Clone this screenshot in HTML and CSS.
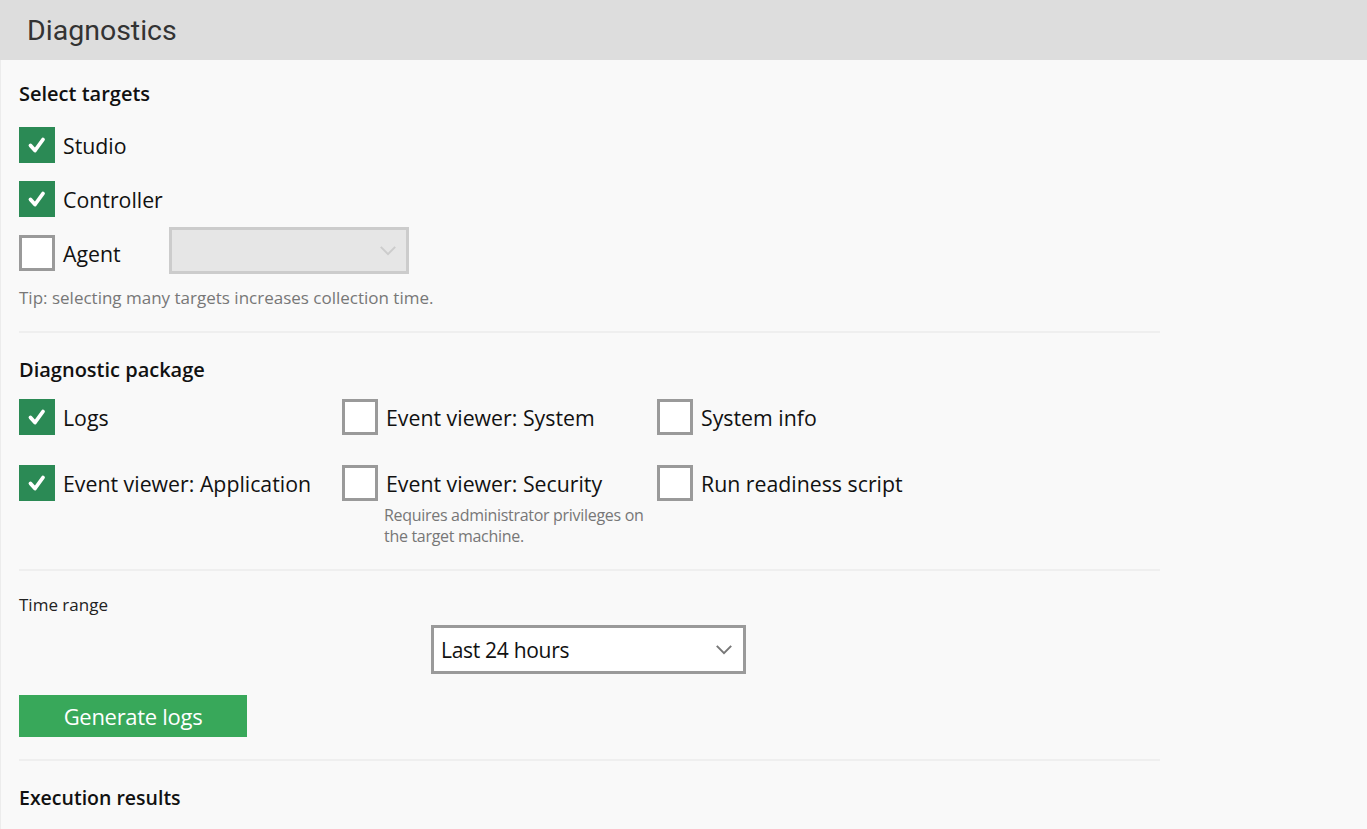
FILE: index.html
```html
<!DOCTYPE html>
<html lang="en">
<head>
    <meta charset="UTF-8">
    <meta name="viewport" content="width=device-width, initial-scale=1.0">
    <title>Diagnostics</title>
    <link rel="stylesheet" href="styles.css">
</head>
<body>
    <div class="header">
        <h1>Diagnostics</h1>
    </div>

    <div class="content">
        <div class="section">
            <h2>Select targets</h2>
            <div class="target-list">
                <div class="check-row">
                    <span class="box checked">
                        <svg viewBox="0 0 36 36"><polyline points="11.5,18.5 16,23.5 24,12.5"/></svg>
                    </span>
                    <span class="label">Studio</span>
                </div>
                <div class="check-row">
                    <span class="box checked">
                        <svg viewBox="0 0 36 36"><polyline points="11.5,18.5 16,23.5 24,12.5"/></svg>
                    </span>
                    <span class="label">Controller</span>
                </div>
                <div class="check-row">
                    <span class="box"></span>
                    <span class="label agent-label">Agent</span>
                    <div class="select disabled">
                        <svg class="chevron" viewBox="0 0 20 12"><polyline points="2,2 10,10 18,2"/></svg>
                    </div>
                </div>
            </div>
            <p class="hint">Tip: selecting many targets increases collection time.</p>
        </div>

        <div class="section">
            <h2>Diagnostic package</h2>
            <div class="package-grid">
                <div class="check-row">
                    <span class="box checked">
                        <svg viewBox="0 0 36 36"><polyline points="11.5,18.5 16,23.5 24,12.5"/></svg>
                    </span>
                    <span class="label">Logs</span>
                </div>
                <div class="check-row">
                    <span class="box"></span>
                    <span class="label">Event viewer: System</span>
                </div>
                <div class="check-row">
                    <span class="box"></span>
                    <span class="label">System info</span>
                </div>
                <div class="check-row">
                    <span class="box checked">
                        <svg viewBox="0 0 36 36"><polyline points="11.5,18.5 16,23.5 24,12.5"/></svg>
                    </span>
                    <span class="label">Event viewer: Application</span>
                </div>
                <div class="check-cell">
                    <div class="check-row">
                        <span class="box"></span>
                        <span class="label">Event viewer: Security</span>
                    </div>
                    <p class="note">Requires administrator privileges on<br>the target machine.</p>
                </div>
                <div class="check-row">
                    <span class="box"></span>
                    <span class="label">Run readiness script</span>
                </div>
            </div>
        </div>

        <div class="section">
            <div class="field-label">Time range</div>
            <div class="select range">
                <span>Last 24 hours</span>
                <svg class="chevron" viewBox="0 0 20 12"><polyline points="2,2 10,10 18,2"/></svg>
            </div>
            <button class="primary">Generate logs</button>
        </div>

        <div class="section last">
            <h2>Execution results</h2>
        </div>
    </div>
</body>
</html>
```

FILE: styles.css
```css
* {
    margin: 0;
    padding: 0;
    box-sizing: border-box;
}

body {
    font-family: 'Open Sans', 'Noto Sans', sans-serif;
    background-color: #f9f9f9;
    color: #111;
    min-height: 100vh;
}

.header {
    height: 60px;
    background-color: #dddddd;
    padding-left: 27px;
    display: flex;
    align-items: center;
}

.header h1 {
    font-family: 'Roboto', sans-serif;
    font-size: 28.5px;
    font-weight: 400;
    color: #333;
}

.content {
    border-left: 1px solid #ececec;
    padding: 0 18px;
    min-height: calc(100vh - 60px);
}

.section {
    max-width: 1141px;
    border-bottom: 2px solid #efefef;
    padding: 20px 0 22px;
}

.section + .section {
    padding-top: 23px;
}

.section.last {
    border-bottom: none;
    padding-top: 23px;
}

h2 {
    font-size: 20px;
    font-weight: 600;
    line-height: 28px;
    color: #111;
}

.section.last h2 {
    font-size: 19.5px;
}

.target-list {
    display: flex;
    flex-direction: column;
    gap: 18px;
    margin-top: 19px;
}

.check-row {
    display: flex;
    align-items: center;
    gap: 8px;
    height: 36px;
}

.box {
    width: 36px;
    height: 36px;
    flex-shrink: 0;
    border: 3px solid #9a9a9a;
    background-color: #fff;
}

.box.checked {
    border: none;
    background-color: #2b8a55;
}

.box svg {
    width: 36px;
    height: 36px;
    display: block;
}

.box polyline {
    fill: none;
    stroke: #fff;
    stroke-width: 3.8;
    stroke-linecap: round;
    stroke-linejoin: round;
}

.label {
    font-size: 21.3px;
    color: #111;
}

.agent-label {
    width: 98px;
}

.select {
    height: 48px;
    border: 3px solid #9a9a9a;
    background-color: #fff;
    display: flex;
    align-items: center;
    justify-content: space-between;
    padding: 0 10px 0 7px;
}

.select.disabled {
    width: 240px;
    height: 47px;
    margin-top: -6px;
    border-color: #cccccc;
    background-color: #e6e6e6;
    justify-content: flex-end;
    padding-right: 9px;
}

.chevron {
    width: 18px;
    height: 11px;
}

.chevron polyline {
    fill: none;
    stroke: #777;
    stroke-width: 2.2;
}

.select.disabled .chevron polyline {
    stroke: #cccccc;
}

.hint {
    font-size: 17px;
    line-height: 22px;
    color: #777;
    margin-top: 16px;
}

.package-grid {
    display: grid;
    grid-template-columns: 323px 315px 1fr;
    row-gap: 30px;
    margin-top: 15px;
    align-items: start;
}

.note {
    font-size: 16px;
    line-height: 21px;
    color: #777;
    margin: 4px 0 0 42px;
    letter-spacing: -0.3px;
}

.field-label {
    font-size: 17px;
    line-height: 22px;
    color: #222;
}

.select.range {
    width: 315px;
    height: 49px;
    margin: 9px 0 0 412px;
}

.select.range span {
    font-size: 21px;
    color: #111;
    letter-spacing: -0.3px;
}

.primary {
    display: block;
    margin-top: 21px;
    width: 228px;
    height: 42px;
    background-color: #38a85a;
    color: #fff;
    border: none;
    font-family: inherit;
    font-size: 22px;
    letter-spacing: -0.3px;
    cursor: pointer;
}
```
